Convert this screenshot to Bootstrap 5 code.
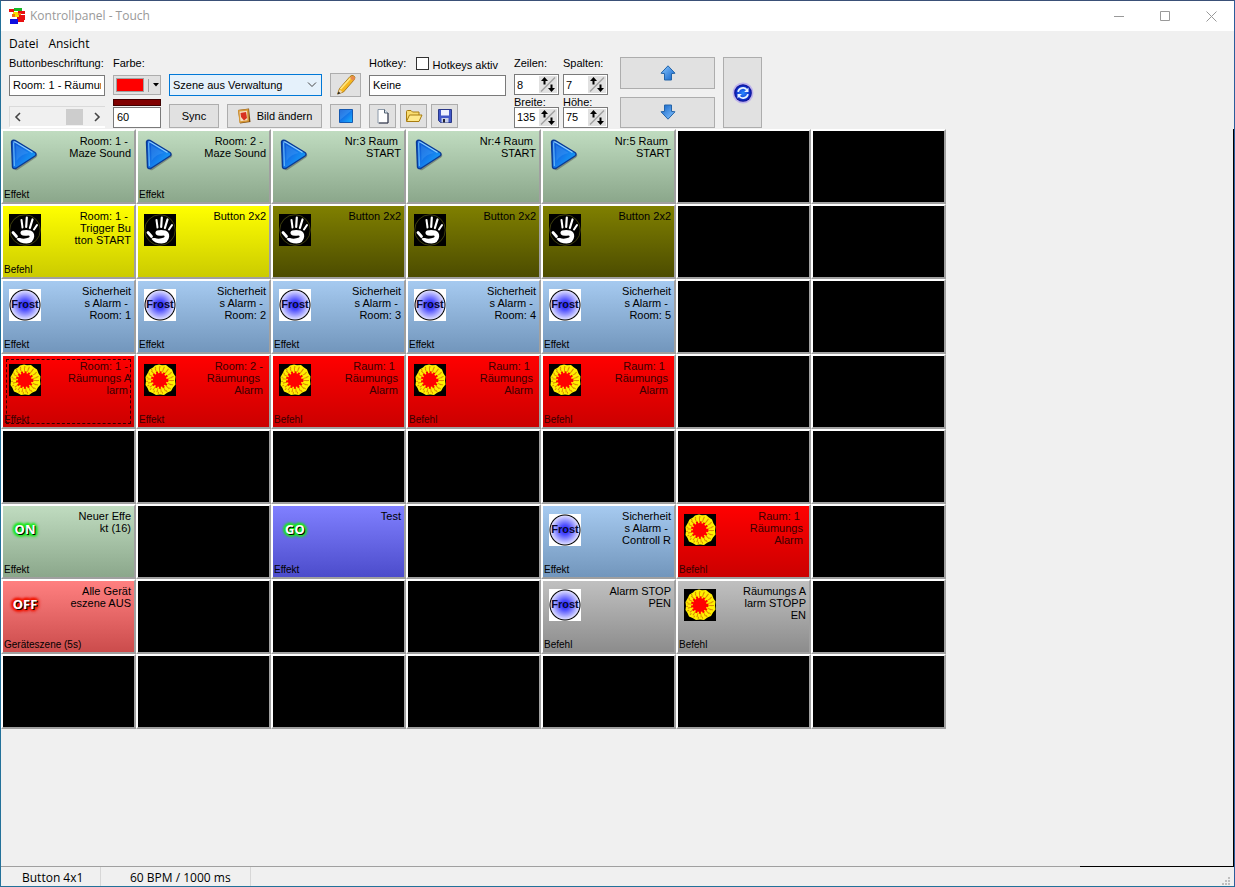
<!DOCTYPE html>
<html lang="de">
<head>
<meta charset="utf-8">
<meta name="viewport" content="width=device-width, initial-scale=1">
<title>Kontrollpanel - Touch</title>
<link rel="stylesheet" href="https://cdn.jsdelivr.net/npm/bootstrap@5.3.0/dist/css/bootstrap.min.css">
<style>
  body { font-family: "Liberation Sans", Arial, sans-serif; font-size: 11px; line-height: 12px; color: #000; background: #f0f0f0; }
  .win { border: 1px solid #23719a; border-top-color: #3a5077; border-right-color: #2b5c9b; }
  .ui-text { font-family: "Open Sans", "Noto Sans", sans-serif; font-size: 12px; line-height: 16px; }
  .titlebar { height: 30px; background: #fff; color: #999; }
  .titlebar .cap { width: 46px; height: 30px; border: 0; background: none; padding: 0; color: #999; }
  .menubar { height: 23px; padding: 5px 8px 0; gap: 10px; }
  .menubar a { color: #000; text-decoration: none; }

  .tools { gap: 8px; padding: 0 8px; height: 75px; }
  .tools label { white-space: nowrap; line-height: 12px; }
  .grp { display: grid; grid-template: 18px 26px 30px / minmax(0, 1fr); align-items: center; flex: none; }
  .grp > :last-child { align-self: end; }
  .fld { border: 1px solid #7a7a7a; border-radius: 0; background: #fff; color: #000; font-size: 11px; line-height: 12px; padding: 0 3px 1px; height: 21px; width: 100%; outline: 0; }
  .tbtn { background: #e1e1e1; border: 1px solid #adadad; border-radius: 0; color: #000; font-size: 11px; line-height: 12px; padding: 0; height: 24px; display: inline-flex; align-items: center; justify-content: center; gap: 6px; }
  .w-caption { width: 96px; } .w-color { width: 48px; } .w-scene { width: 153px; } .w-key { width: 137px; }
  .w-sync { width: 50px; } .w-img { width: 95px; } .w-icon { width: 31px; } .w-file { width: 27px; }
  .w-move { width: 95px; } .w-refresh { width: 39px; }
  .colorbtn { height: 20px; gap: 4px; }
  .sbar { height: 22px; border-top: 1px solid #dadada; border-left: 1px solid #dadada; border-bottom: 2px solid #fff; }
  .sbar button { border: 0; background: none; padding: 0; width: 16px; line-height: 0; }
  .sbar input { appearance: none; background: none; width: 0; flex: 1; height: 18px; margin: 0; }
  .sbar input::-webkit-slider-runnable-track { height: 16px; background: none; }
  .sbar input::-webkit-slider-thumb { appearance: none; width: 17px; height: 16px; background: #cdcdcd; border-radius: 0; }
  .swatch { width: 28px; height: 14px; background: #f00; border: 1px solid #a0a0a0; }
  .split { height: 13px; width: 1px; background: #a0a0a0; }
  .dark { height: 7px; background: #800000; border: 1px solid #400000; margin-bottom: 1px; }
  .scene { appearance: none; height: 22px; border: 1px solid #0078d7; background: #e5f1fb url("data:image/svg+xml,%3Csvg xmlns='http://www.w3.org/2000/svg' width='10' height='6' fill='none' stroke='%23444'%3E%3Cpath d='M1 .5l4 4 4-4'/%3E%3C/svg%3E") no-repeat right 4px center; }
  .tick { appearance: none; width: 13px; height: 13px; border: 1px solid #333; background: #fff; margin: 0; }
  .tick:checked { background: #333; }
  .spin { width: 45px; height: 21px; border: 1px solid #7a7a7a; background: #fff; }
  .spin input { width: 0; flex: 1; min-width: 0; border: 0; padding: 0 0 0 2px; font-size: 11px; outline: 0; color: #000; }
  .spin button { width: 18px; height: 17px; border: 0; padding: 0; background: #e1e1e1; line-height: 0; margin: 1px; }
  .spins { display: grid; grid-template-rows: 18px 25px 9px 22px; align-items: center; flex: none; }
  .mover { padding: 3px 0 1px; gap: 8px; }

  .board { border-right: 1px solid #000; }
  .pads { display: grid; grid-template-columns: repeat(7, 135px); grid-auto-rows: 75px; }
  .pad { position: relative; display: flex; flex-direction: column; justify-content: space-between; border: 2px solid; border-color: #fff #a0a0a0 #a0a0a0 #fff; background: #000; color: #000; padding: 4px 3px 1px 1px; font-size: 11px; line-height: 12px; text-align: right; }
  .pad svg, .pad .glow, .pad .frost { width: 32px; height: 32px; flex: none; margin: 4px 0 0 5px; }
  .pad .face { display: flex; justify-content: space-between; align-self: stretch; }
  .pad .txt { white-space: pre; }
  .pad .kind { font-size: 10px; line-height: 12px; align-self: flex-start; }
  .g { background: linear-gradient(#c0dcc0, #8ba78b); }
  .y { background: linear-gradient(#ff0, #cbcb00); }
  .o { background: linear-gradient(#808000, #4c4c00); }
  .b { background: linear-gradient(#a6caf0, #7296bc); }
  .r { background: linear-gradient(#f00, #cb0000); color: #380000; }
  .v { background: linear-gradient(#8080ff, #4c4ccb); }
  .s { background: linear-gradient(#ff8080, #cb4c4c); }
  .c { background: linear-gradient(#c0c0c0, #8c8c8c); }
  .focused::after { content: ""; position: absolute; inset: 3px; border: 1px dashed #300; }
  .frost { background: radial-gradient(circle, #1c1cff 0, #5050ff 5px, #d8d8ff 14px, #000 15px, #000 15px, #fff 16px); font-weight: bold; line-height: 31px; text-align: center; color: #080830; }
  .glow { font: bold 13px/31px "Open Sans", sans-serif; color: #fff; text-align: center; --h: #1fe81f; text-shadow: 1px 1px 0 #000, 0 0 2px var(--h), 0 0 2px var(--h), 0 0 3px var(--h), 0 0 3px var(--h), 1px 1px 4px var(--h), -1px -1px 3px var(--h), 2px 2px 3px var(--h), -2px 0 3px var(--h), 2px 0 3px var(--h), 0 2px 3px var(--h), 0 -2px 3px var(--h); }
  .hot { --h: #f01800; }
  .edge { height: 1px; } .edge-a { width: 87.5%; background: #a0a0a0; } .edge-b { background: #000; }
  .status { height: 19px; }
  .status > div { border-right: 1px solid #d7d7d7; line-height: 22px; white-space: nowrap; }
  .p1 { width: 100px; padding-left: 21px; } .p2 { width: 150px; padding-left: 29px; }
</style>
</head>
<body>
<svg width="0" height="0" class="position-absolute" aria-hidden="true">
  <defs>
    <linearGradient id="gPlay" x1="0" y1="0" x2="1" y2="1"><stop offset="0" stop-color="#0c50cc"/><stop offset=".5" stop-color="#1478ea"/><stop offset="1" stop-color="#19b4ff"/></linearGradient>
    <linearGradient id="gArr" x1="0" y1="0" x2="1" y2="1"><stop offset="0" stop-color="#8cc8ff"/><stop offset="1" stop-color="#0f62c8"/></linearGradient>
    <radialGradient id="gRef"><stop offset="0" stop-color="#2a8cff"/><stop offset=".7" stop-color="#1038d0"/><stop offset="1" stop-color="#0a0a90"/></radialGradient>
  </defs>
  <symbol id="play" viewBox="0 0 32 32">
    <path d="M5 3.500Q5 1.500 7.500 2.500L27 14.500Q29.500 16.500 27 18.500L8.500 31Q5.500 32 5 29Z" fill="#444" opacity=".45"/>
    <path d="M2.500 3Q3 .500 6 1.500L26 13.500Q28 15 26 17L7.500 29Q4 30.500 3.500 28Z" fill="url(#gPlay)" stroke="#0a3a94" stroke-width="1.400"/>
    <path d="M4.500 3.500Q5 2.500 6.500 3.300L23.500 13.600" fill="none" stroke="#8ccfff" stroke-width="1.200"/>
    <path d="M4.600 4L5.400 27" fill="none" stroke="#64b4f5" stroke-width="1.200"/>
    <path d="M7 6L20 14Q12 15 7.500 22Z" fill="#5db2ff" opacity=".25"/>
  </symbol>
  <symbol id="hand" viewBox="0 0 32 32">
    <path fill="#000" d="M0 0h32v32H0z"/><circle cx="16" cy="16" r="15.300" fill="none" stroke="#4c4c10" stroke-width=".8"/>
    <g stroke="#fff" stroke-linecap="round" fill="none"><path d="M12.500 6l1 7.500" stroke-width="2"/><path d="M17.800 3.500l-.6 9.500" stroke-width="2.200"/><path d="M23.500 5.500l-2.600 8.500" stroke-width="2.200"/><path d="M28 11l-3 4.500" stroke-width="2.100"/><path d="M4 18.500l3.500 4" stroke-width="2.800"/></g>
    <path fill="#fff" d="M13 16.500Q17 15.500 21.500 16.500Q25.500 18 25.200 22.500Q24.500 29 17.500 29.500Q11 29.500 7.500 25Q7.500 23.500 11 24Q15 25.500 20 23.500Q21.500 22 19.500 21.500Q14 22.500 12 20.500Q10.500 18 13 16.500Z"/>
  </symbol>
  <symbol id="flower" viewBox="0 0 32 32">
    <path fill="#000" d="M0 0h32v32H0z"/>
    <path fill="#fff000" d="M11 1.500l4-1 3 .800 4-.3 3 2.500 3 2 1.500 4 2 3-.5 4 .5 4-2.500 3-2 3.500-3.500 1.500-3.500 2.500-4-.500-4 .500-3.500-2-3.500-1.500-1.500-3.500-2-3 .500-4-.500-4 2-3.500 2-4 3.500-2z"/>
    <circle cx="16" cy="16" r="10.500" fill="none" stroke="#e08800" stroke-width="4" stroke-dasharray="1 2.700"/>
    <circle cx="16" cy="16" r="13" fill="none" stroke="#d89000" stroke-width="2" stroke-dasharray="1 3.300"/>
    <circle cx="15.700" cy="16" r="7" fill="#f00"/><circle cx="15.700" cy="16" r="7.500" fill="none" stroke="#f00" stroke-width="2.500" stroke-dasharray="2 1.500"/>
  </symbol>
  <symbol id="arrow" viewBox="0 0 16 16"><path d="M8 .800L15 8.200 11.500 8.600V15H4.500V8.600L1 8.200Z" fill="url(#gArr)" stroke="#2464a8" stroke-linejoin="round"/></symbol>
  <symbol id="spin" viewBox="0 0 18 17"><path d="M2 15.500L16 1.500" stroke="#a0a0a0" stroke-width="1.500"/><path d="M5.500 1l3.500 4H6.500v3.500h-2V5H2zM12.500 16L9 12h2.500V8.500h2V12H16z"/></symbol>
</svg>

<div class="win min-vh-100 d-flex flex-column">
  <header class="titlebar ui-text d-flex align-items-center">
    <svg class="ms-2 me-1" width="17" height="16" viewBox="0 0 17 16"><path fill="#e81010" d="M0 1h5v3H0zM9 3h7v3H9zM8 7h8v5H8zM9 11h6v3H9z"/><path fill="#18b828" d="M5 0h8v3H5z"/><path fill="#f8e000" d="M4 4h5v2H4zM6 6h4v3H6z"/><path fill="#f07010" d="M3 6h3v3H3zM9 5h3v2H9z"/><path fill="#1010e0" d="M1 11h8v5H1z"/></svg>
    <span>Kontrollpanel - Touch</span>
    <div class="ms-auto d-flex me-0">
      <button class="cap"><svg width="11" height="11" fill="none" stroke="currentColor"><path d="M0 5.500h10"/></svg></button>
      <button class="cap"><svg width="11" height="11" fill="none" stroke="currentColor"><path d="M.5 .5h9v9h-9z"/></svg></button>
      <button class="cap"><svg width="11" height="11" fill="none" stroke="currentColor"><path d="M.5 .5l10 10M10.500 .5l-10 10"/></svg></button>
    </div>
  </header>
  <nav class="menubar ui-text d-flex"><a href="#">Datei</a><a href="#">Ansicht</a></nav>

  <div class="tools d-flex">
    <div class="grp w-caption">
      <label for="cap">Buttonbeschriftung:</label>
      <input class="fld" id="cap" value="Room: 1 - Räumungs Alarm">
      <div class="sbar d-flex align-items-center">
        <button><svg width="16" height="16" fill="none" stroke="#444" stroke-width="1.600"><path d="M10 4L6 8l4 4"/></svg></button>
        <input type="range" min="0" max="100" value="88">
        <button><svg width="16" height="16" fill="none" stroke="#444" stroke-width="1.600"><path d="M6 4l4 4-4 4"/></svg></button>
      </div>
    </div>
    <div class="grp w-color">
      <label for="col">Farbe:</label>
      <button class="tbtn colorbtn" id="col"><span class="swatch"></span><span class="split"></span><svg width="6" height="4"><path d="M0 0h6L3 3.500z"/></svg></button>
      <div><div class="dark"></div><input class="fld" value="60"></div>
    </div>
    <div class="grp w-scene">
      <span></span>
      <select class="fld scene"><option>Szene aus Verwaltung</option></select>
      <div class="d-flex justify-content-between">
        <button class="tbtn w-sync">Sync</button>
        <button class="tbtn w-img"><svg width="14" height="16" viewBox="0 0 14 16"><path d="M1 2l11-1.500L13.500 14 3 15.500z" fill="#7b4a12"/><path d="M1 2l10.500-1L12 13.500 2.500 15z" fill="#d89a38"/><path d="M2.500 3.500l7.500-.7.5 9.500-7 1z" fill="#f4ddc0"/><path d="M3.500 5l5.500-1 1 6L7 12.500 4 9z" fill="#d83020"/></svg>Bild ändern</button>
      </div>
    </div>
    <div class="grp w-icon">
      <span></span>
      <button class="tbtn"><svg width="22" height="22" viewBox="0 0 22 22"><path d="M2.500 20l2-5.500L15 2.500q2-2 4-.5t0 4L8.500 18z" fill="#f5b820" stroke="#9a6a10" stroke-width=".8"/><path d="M5.500 15L16 3.500" stroke="#ffe680" stroke-width="1.800"/><path d="M3 20l1.500-4.500L7.500 18z" fill="#f0d8b0"/><path d="M2.500 20.500l1-3 2 1.800z" fill="#222"/><path d="M15 4l3 3 1.500-1.500q1-2-.5-3t-3 .2z" fill="#e88a50"/></svg></button>
      <button class="tbtn"><svg width="14" height="14" viewBox="0 0 14 14"><path d="M.5 .5h13v13H.5z" fill="url(#gPlay)" stroke="#1458b0"/><path d="M1 1h12L1 11z" fill="#6ab8ff" opacity=".3"/></svg></button>
    </div>
    <div class="grp w-key">
      <div class="d-flex align-items-center">
        <label for="key">Hotkey:</label>
        <input class="tick ms-auto me-1" type="checkbox" id="on"><label for="on" class="me-2 pt-1">Hotkeys aktiv</label>
      </div>
      <input class="fld" id="key" value="Keine">
      <div class="d-flex gap-1">
        <button class="tbtn w-file"><svg width="16" height="16" viewBox="0 0 16 16"><path d="M3 1.500h6.500L13 5v10H3z" fill="#fff" stroke="#8a98a8"/><path d="M9.500 1.500V5H13" fill="#dde6f0" stroke="#506070"/><path d="M13 5v10H4" fill="none" stroke="#334"/></svg></button>
        <button class="tbtn w-file"><svg width="18" height="16" viewBox="0 0 18 16"><path d="M1.500 13V3.500q0-1 1-1H6l1.500 1.500H14V7" fill="#f8dc70" stroke="#a87c10"/><path d="M1.500 13.500L4.500 7H17l-3 6.500z" fill="#ffe98a" stroke="#a87c10" stroke-linejoin="round"/></svg></button>
        <button class="tbtn w-file"><svg width="16" height="16" viewBox="0 0 16 16"><path d="M1.500 1.500h13v13h-11l-2-2z" fill="#4258c8" stroke="#2a3888"/><path d="M4 2h8v5.500H4z" fill="#eef2ff"/><path d="M4.500 10h7v4.500h-7z" fill="#c8d0e8"/><path d="M6 11h2v3.500H6z" fill="#223"/></svg></button>
      </div>
    </div>
    <div class="d-flex gap-1">
      <div class="spins">
        <label for="z">Zeilen:</label>
        <div class="spin d-flex"><input id="z" value="8"><button><svg width="18" height="17"><use href="#spin"/></svg></button></div>
        <label for="w">Breite:</label>
        <div class="spin d-flex"><input id="w" value="135"><button><svg width="18" height="17"><use href="#spin"/></svg></button></div>
      </div>
      <div class="spins">
        <label for="sp">Spalten:</label>
        <div class="spin d-flex"><input id="sp" value="7"><button><svg width="18" height="17"><use href="#spin"/></svg></button></div>
        <label for="h">Höhe:</label>
        <div class="spin d-flex"><input id="h" value="75"><button><svg width="18" height="17"><use href="#spin"/></svg></button></div>
      </div>
    </div>
    <div class="mover d-flex flex-column ms-1 w-move">
      <button class="tbtn h-auto flex-fill"><svg width="16" height="16"><use href="#arrow"/></svg></button>
      <button class="tbtn h-auto flex-fill"><svg width="16" height="16"><use href="#arrow" transform="rotate(180 8 8)"/></svg></button>
    </div>
    <div class="mover d-flex">
      <button class="tbtn h-auto w-refresh"><svg width="22" height="22" viewBox="0 0 20 20"><circle cx="10" cy="10" r="9.500" fill="#7a5cff" opacity=".35"/><circle cx="10" cy="10" r="8" fill="url(#gRef)"/><path d="M5.500 9a4.600 4.600 0 0 1 8-2M14.500 11a4.600 4.600 0 0 1-8 2" fill="none" stroke="#e8f4ff" stroke-width="1.600"/><path d="M15 5v4h-4zM5 15V11H9z" fill="#e8f4ff"/></svg></button>
    </div>
  </div>

  <main class="board flex-grow-1">
    <div class="pads">
      <button class="pad g"><span class="face"><svg><use href="#play"/></svg><span class="txt">Room: 1 - 
Maze Sound</span></span><span class="kind">Effekt</span></button>
      <button class="pad g"><span class="face"><svg><use href="#play"/></svg><span class="txt">Room: 2 - 
Maze Sound</span></span><span class="kind">Effekt</span></button>
      <button class="pad g"><span class="face"><svg><use href="#play"/></svg><span class="txt">Nr:3 Raum 
START</span></span></button>
      <button class="pad g"><span class="face"><svg><use href="#play"/></svg><span class="txt">Nr:4 Raum 
START</span></span></button>
      <button class="pad g"><span class="face"><svg><use href="#play"/></svg><span class="txt">Nr:5 Raum 
START</span></span></button>
      <button class="pad"></button><button class="pad"></button>

      <button class="pad y"><span class="face"><svg><use href="#hand"/></svg><span class="txt">Room: 1 - 
Trigger Bu
tton START</span></span><span class="kind">Befehl</span></button>
      <button class="pad y"><span class="face"><svg><use href="#hand"/></svg><span class="txt">Button 2x2</span></span></button>
      <button class="pad o"><span class="face"><svg><use href="#hand"/></svg><span class="txt">Button 2x2</span></span></button>
      <button class="pad o"><span class="face"><svg><use href="#hand"/></svg><span class="txt">Button 2x2</span></span></button>
      <button class="pad o"><span class="face"><svg><use href="#hand"/></svg><span class="txt">Button 2x2</span></span></button>
      <button class="pad"></button><button class="pad"></button>

      <button class="pad b"><span class="face"><span class="frost">Frost</span><span class="txt">Sicherheit
s Alarm - 
Room: 1</span></span><span class="kind">Effekt</span></button>
      <button class="pad b"><span class="face"><span class="frost">Frost</span><span class="txt">Sicherheit
s Alarm - 
Room: 2</span></span><span class="kind">Effekt</span></button>
      <button class="pad b"><span class="face"><span class="frost">Frost</span><span class="txt">Sicherheit
s Alarm - 
Room: 3</span></span><span class="kind">Effekt</span></button>
      <button class="pad b"><span class="face"><span class="frost">Frost</span><span class="txt">Sicherheit
s Alarm - 
Room: 4</span></span><span class="kind">Effekt</span></button>
      <button class="pad b"><span class="face"><span class="frost">Frost</span><span class="txt">Sicherheit
s Alarm - 
Room: 5</span></span><span class="kind">Effekt</span></button>
      <button class="pad"></button><button class="pad"></button>

      <button class="pad r focused"><span class="face"><svg><use href="#flower"/></svg><span class="txt">Room: 1 - 
Räumungs A
larm </span></span><span class="kind">Effekt</span></button>
      <button class="pad r"><span class="face"><svg><use href="#flower"/></svg><span class="txt">Room: 2 - 
Räumungs  
Alarm </span></span><span class="kind">Effekt</span></button>
      <button class="pad r"><span class="face"><svg><use href="#flower"/></svg><span class="txt">Raum: 1  
Räumungs 
Alarm </span></span><span class="kind">Befehl</span></button>
      <button class="pad r"><span class="face"><svg><use href="#flower"/></svg><span class="txt">Raum: 1  
Räumungs 
Alarm </span></span><span class="kind">Befehl</span></button>
      <button class="pad r"><span class="face"><svg><use href="#flower"/></svg><span class="txt">Raum: 1  
Räumungs 
Alarm </span></span><span class="kind">Befehl</span></button>
      <button class="pad"></button><button class="pad"></button>

      <button class="pad"></button><button class="pad"></button><button class="pad"></button><button class="pad"></button><button class="pad"></button><button class="pad"></button><button class="pad"></button>

      <button class="pad g"><span class="face"><span class="glow">ON</span><span class="txt">Neuer Effe
kt (16)</span></span><span class="kind">Effekt</span></button>
      <button class="pad"></button>
      <button class="pad v"><span class="face"><span class="glow">GO</span><span class="txt">Test</span></span><span class="kind">Effekt</span></button>
      <button class="pad"></button>
      <button class="pad b"><span class="face"><span class="frost">Frost</span><span class="txt">Sicherheit
s Alarm - 
Controll R</span></span><span class="kind">Effekt</span></button>
      <button class="pad r"><span class="face"><svg><use href="#flower"/></svg><span class="txt">Raum: 1  
Räumungs 
Alarm </span></span><span class="kind">Befehl</span></button>
      <button class="pad"></button>

      <button class="pad s"><span class="face"><span class="glow hot">OFF</span><span class="txt">Alle Gerät
eszene AUS</span></span><span class="kind">Geräteszene (5s)</span></button>
      <button class="pad"></button><button class="pad"></button><button class="pad"></button>
      <button class="pad c"><span class="face"><span class="frost">Frost</span><span class="txt">Alarm STOP
PEN</span></span><span class="kind">Befehl</span></button>
      <button class="pad c"><span class="face"><svg><use href="#flower"/></svg><span class="txt">Räumungs A
larm STOPP
EN</span></span><span class="kind">Befehl</span></button>
      <button class="pad"></button>

      <button class="pad"></button><button class="pad"></button><button class="pad"></button><button class="pad"></button><button class="pad"></button><button class="pad"></button><button class="pad"></button>
    </div>
  </main>
  <div class="edge d-flex"><div class="edge-a"></div><div class="edge-b flex-fill"></div></div>
  <footer class="status ui-text d-flex">
    <div class="p1">Button 4x1</div><div class="p2">60 BPM / 1000 ms</div>
    <svg class="ms-auto align-self-end me-1" width="8" height="9" fill="#bfbfbf"><path d="M6 0h2v2H6zM3 3h2v2H3zM6 3h2v2H6zM0 6h2v2H0zM3 6h2v2H3zM6 6h2v2H6z"/></svg>
  </footer>
</div>
<script src="https://cdn.jsdelivr.net/npm/bootstrap@5.3.0/dist/js/bootstrap.bundle.min.js"></script>
</body>
</html>
